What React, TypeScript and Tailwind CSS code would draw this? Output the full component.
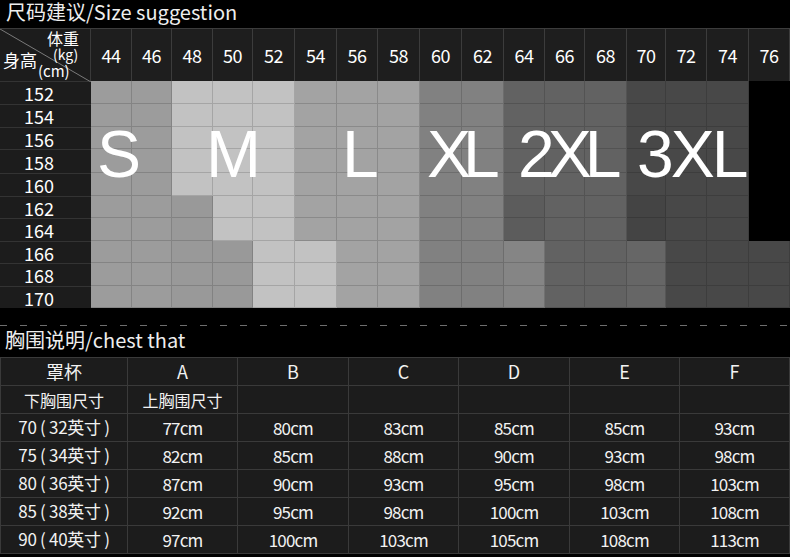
import React from "react";

const weights = [44, 46, 48, 50, 52, 54, 56, 58, 60, 62, 64, 66, 68, 70, 72, 74, 76];
const heights = [152, 154, 156, 158, 160, 162, 164, 166, 168, 170];

const S = "bg-[#9c9c9c]";
const S2 = "bg-[#999999]";
const M = "bg-[#c2c2c2]";
const L = "bg-[#a3a3a3]";
const XL = "bg-[#818181]";
const XL2 = "bg-[#858585]";
const X2 = "bg-[#626262]";
const X2b = "bg-[#5c5c5c]";
const X2c = "bg-[#666666]";
const X3 = "bg-[#484848]";
const X3b = "bg-[#444444]";
const K = "bg-black";

const top5 = [S, S, M, M, M, L, L, L, XL, XL, X2, X2, X2, X3, X3, X3, K];
const mid2 = [S, S, S2, M, M, L, L, L, XL, XL, X2b, X2, X2, X3b, X3, X3, K];
const low3 = [S, S, S2, S2, M, M, L, L, XL, XL, XL2, X2, X2, X2c, X3, X3, X3];
const matrix = [top5, top5, top5, top5, top5, mid2, mid2, low3, low3, low3];

const cup = ["A", "B", "C", "D", "E", "F"];
const chestRows = [
  { u: "70 ( 32英寸 )", v: ["77cm", "80cm", "83cm", "85cm", "85cm", "93cm"] },
  { u: "75 ( 34英寸 )", v: ["82cm", "85cm", "88cm", "90cm", "93cm", "98cm"] },
  { u: "80 ( 36英寸 )", v: ["87cm", "90cm", "93cm", "95cm", "98cm", "103cm"] },
  { u: "85 ( 38英寸 )", v: ["92cm", "95cm", "98cm", "100cm", "103cm", "108cm"] },
  { u: "90 ( 40英寸 )", v: ["97cm", "100cm", "103cm", "105cm", "108cm", "113cm"] },
];

const GRID_COLS =
  "grid-cols-[91px_41px_40px_41px_40px_42px_42px_41px_42px_42px_42px_41px_40px_42px_39px_41px_42px_41px]";

export default function App() {
  return (
    <div className="w-[790px] h-[557px] bg-black text-white font-['Noto_Sans_CJK_SC',sans-serif] overflow-hidden">
      {/* title */}
      <div className="h-[28px] pl-[6px] text-[20px] leading-[24px] text-[#eeeeee] whitespace-nowrap">尺码建议/Size suggestion</div>

      {/* size table */}
      <div className="relative">
        <div
          className={`grid ${GRID_COLS} grid-rows-[53px_23px_23px_22px_24px_23px_22px_23px_22px_23px_22px]`}
        >
          {/* corner header */}
          <div className="relative bg-[#1c1c1c] border-t border-r border-[#3a3a3a]">
            <svg className="absolute inset-0" width="91" height="53" viewBox="0 0 91 53">
              <line x1="0" y1="0" x2="91" y2="53" stroke="#7a7a7a" strokeWidth="1" />
            </svg>
            <span className="absolute left-[47px] top-[1px] text-[16px] leading-none">体重</span>
            <span className="absolute left-[53px] top-[18px] text-[14px] leading-none">(kg)</span>
            <span className="absolute left-[3px] top-[22px] text-[17px] leading-none">身高</span>
            <span className="absolute left-[38px] top-[34px] text-[15px] leading-none">(cm)</span>
          </div>
          {weights.map((w) => (
            <div
              key={w}
              className="flex items-center justify-center bg-[#1e1e1e] border-t border-r border-[#3c3c3c] text-[18px] tracking-[-0.5px]"
            >
              {w}
            </div>
          ))}
          {heights.map((h, ri) => (
            <React.Fragment key={h}>
              <div className="flex items-center justify-center pr-[13px] bg-[#1c1c1c] border-t border-[#333333] text-[18px] leading-none">
                {h}
              </div>
              {matrix[ri].map((c, ci) => (
                <div key={ci} className={`${c} border-r border-b border-black/15`} />
              ))}
            </React.Fragment>
          ))}
        </div>

        {/* size letters overlay */}
        <div
          className={`absolute inset-x-0 top-[93px] grid ${GRID_COLS} text-[66px] leading-none font-['Liberation_Sans',Arial,sans-serif] text-white whitespace-nowrap pointer-events-none`}
        >
          <span className="col-start-2 row-start-1 pl-[6px]">S</span>
          <span className="col-start-4 row-start-1 pl-[34px]">M</span>
          <span className="col-start-8 row-start-1 pl-[5px]">L</span>
          <span className="col-start-10 row-start-1 pl-[7px] tracking-[-8px]">XL</span>
          <span className="col-start-12 row-start-1 pl-[14px] tracking-[-7px]">2XL</span>
          <span className="col-start-15 row-start-1 pl-[10px] tracking-[-3px]">3XL</span>
        </div>
      </div>

      {/* dashed separator */}
      <div className="mt-[17px] h-px w-full bg-[repeating-linear-gradient(90deg,#6e6e6e_0_7px,transparent_7px_20px)]" />

      {/* chest title */}
      <div className="h-[31px] pl-[5px] text-[20px] leading-[28px] text-[#eeeeee] whitespace-nowrap">胸围说明/chest that</div>

      {/* chest table */}
      <div className="grid grid-cols-[127px_110px_111px_110px_111px_110px_110px] auto-rows-[28px] border-t border-l border-[#3a3a3a] text-[#f2f2f2]">
        <div className="flex items-center justify-center bg-[#1c1c1c] border-r border-b border-[#3a3a3a] text-[18px]">罩杯</div>
        {cup.map((c) => (
          <div key={c} className="flex items-center justify-center bg-[#1c1c1c] border-r border-b border-[#3a3a3a] text-[18px]">
            {c}
          </div>
        ))}
        <div className="flex items-center justify-center bg-[#1c1c1c] border-r border-b border-[#3a3a3a] text-[16px]">下胸围尺寸</div>
        <div className="flex items-center justify-center bg-[#1c1c1c] border-r border-b border-[#3a3a3a] text-[16px]">上胸围尺寸</div>
        {cup.slice(1).map((c) => (
          <div key={c} className="bg-[#1c1c1c] border-r border-b border-[#3a3a3a]" />
        ))}
        {chestRows.map((r, i) => (
          <React.Fragment key={i}>
            <div className="flex items-center justify-center pb-[2px] bg-[#1c1c1c] border-r border-b border-[#3a3a3a] text-[17px] tracking-[-0.3px] whitespace-pre">
              {r.u}
            </div>
            {r.v.map((v, j) => (
              <div
                key={j}
                className="flex items-center justify-center bg-[#1c1c1c] border-r border-b border-[#3a3a3a] text-[17px] tracking-[-0.8px]"
              >
                {v}
              </div>
            ))}
          </React.Fragment>
        ))}
      </div>
    </div>
  );
}
